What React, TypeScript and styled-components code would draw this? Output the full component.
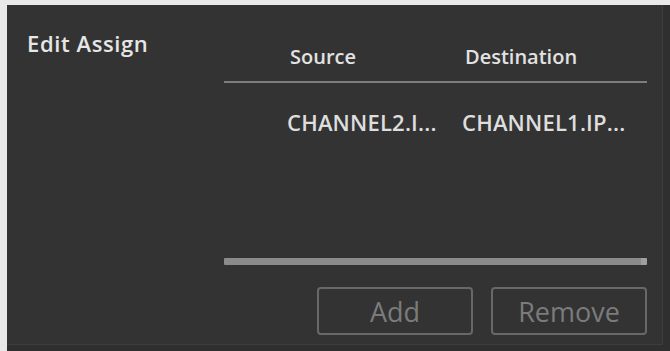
import React from "react";
import styled, { createGlobalStyle } from "styled-components";

const Global = createGlobalStyle`
  html, body { margin: 0; padding: 0; }
  body {
    background: #e9e9e9;
    width: 670px;
    height: 351px;
    overflow: hidden;
    font-family: "Open Sans", "Noto Sans", sans-serif;
  }
`;

const Frame = styled.div`
  margin: 5px 0 0 7px;
  width: 663px;
  height: 346px;
  background: #2f2f2f;
`;

const Panel = styled.div`
  width: 655px;
  height: 339px;
  background: #333333;
  border-right: 1px solid #3d3d3d;
  border-bottom: 1px solid #3d3d3d;
  display: grid;
  grid-template-columns: 217px 423px;
`;

const Title = styled.div`
  padding: 23px 0 0 20px;
  color: #e6e6e6;
  font-size: 22px;
  font-weight: 600;
  letter-spacing: 0.6px;
`;

const Side = styled.div`
  display: flex;
  flex-direction: column;
  padding-top: 26px;
`;

const Row = styled.div<{ $head?: boolean }>`
  display: grid;
  grid-template-columns: 56px 175px 1fr;
  align-items: center;
  height: ${(p) => (p.$head ? "50px" : "38px")};
  border-bottom: ${(p) => (p.$head ? "2px solid #7d7d7d" : "none")};
  margin-top: ${(p) => (p.$head ? "0" : "20px")};
  color: ${(p) => (p.$head ? "#e2e2e2" : "#dedede")};
  font-size: ${(p) => (p.$head ? "20px" : "22px")};
  font-weight: 600;
  letter-spacing: ${(p) => (p.$head ? "0" : "0.2px")};
`;

const Cell = styled.div<{ $pad: number }>`
  padding-left: ${(p) => p.$pad}px;
  white-space: nowrap;
`;

const Body = styled.div`
  height: 175px;
`;

const Scrollbar = styled.div`
  height: 7px;
  background: linear-gradient(to right, #8b8b8b 0, #8b8b8b 98.5%, #a0a0a0 98.5%, #a0a0a0 100%);
  border-radius: 1px;
`;

const Buttons = styled.div`
  display: flex;
  justify-content: flex-end;
  gap: 18px;
  margin-top: 22px;
`;

const Button = styled.button`
  width: 156px;
  height: 48px;
  background: transparent;
  border: 2px solid #686868;
  border-radius: 4px;
  color: #7b7b7b;
  font-family: "Open Sans", "Noto Sans", sans-serif;
  font-size: 27px;
  line-height: 1;
  padding: 0;
`;

export default function App() {
  return (
    <>
      <Global />
      <Frame>
        <Panel>
          <Title>Edit Assign</Title>
          <Side>
            <Row $head>
              <span />
              <Cell $pad={10}>Source</Cell>
              <Cell $pad={10}>Destination</Cell>
            </Row>
            <Body>
              <Row>
                <span />
                <Cell $pad={7}>CHANNEL2.I...</Cell>
                <Cell $pad={7}>CHANNEL1.IP...</Cell>
              </Row>
            </Body>
            <Scrollbar />
            <Buttons>
              <Button disabled>Add</Button>
              <Button disabled>Remove</Button>
            </Buttons>
          </Side>
        </Panel>
      </Frame>
    </>
  );
}
